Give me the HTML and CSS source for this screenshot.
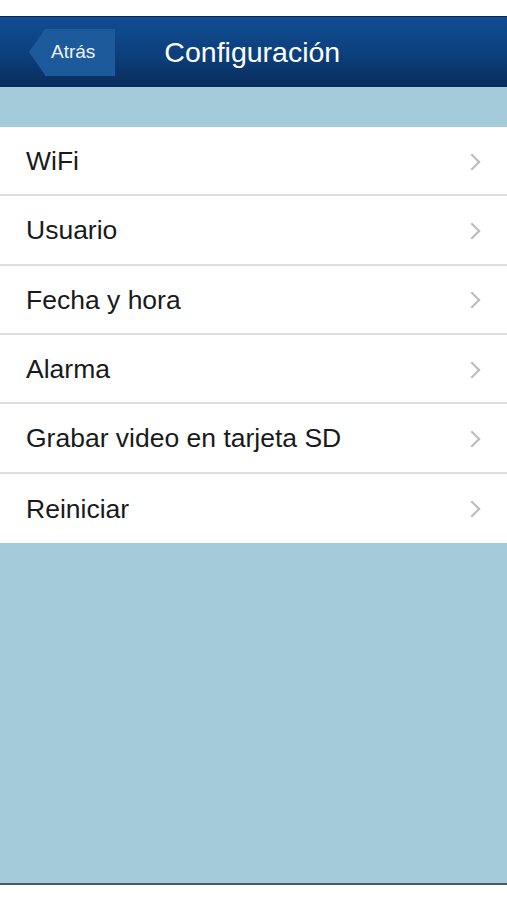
FILE: index.html
```html
<!DOCTYPE html>
<html lang="es">
<head>
    <meta charset="UTF-8">
    <meta name="viewport" content="width=device-width, initial-scale=1.0">
    <title>Configuración</title>
    <link rel="stylesheet" href="styles.css">
</head>
<body>
    <div class="pantalla">
        <div class="barra-estado"></div>
        <div class="cabecera">
            <div class="atras">
                <span class="atras-punta"></span>
                <span class="atras-texto">Atrás</span>
            </div>
            <div class="titulo">Configuración</div>
        </div>
        <div class="contenido">
            <div class="espacio"></div>
            <ul class="lista">
                <li class="fila"><span>WiFi</span><span class="flecha"></span></li>
                <li class="fila"><span>Usuario</span><span class="flecha"></span></li>
                <li class="fila"><span>Fecha y hora</span><span class="flecha"></span></li>
                <li class="fila"><span>Alarma</span><span class="flecha"></span></li>
                <li class="fila"><span>Grabar video en tarjeta SD</span><span class="flecha"></span></li>
                <li class="fila"><span>Reiniciar</span><span class="flecha"></span></li>
            </ul>
        </div>
        <div class="pie"></div>
    </div>
</body>
</html>
```

FILE: styles.css
```css
body {
    margin: 0;
    background: #ffffff;
    font-family: "Liberation Sans", Arial, sans-serif;
}
.pantalla {
    display: flex;
    flex-direction: column;
    height: 900px;
}
.barra-estado {
    height: 16px;
    background: #ffffff;
}
.cabecera {
    height: 71px;
    display: flex;
    align-items: center;
    background: linear-gradient(to bottom, #114d92 0%, #0c3f7c 55%, #092c5b 100%);
    border-top: 1px solid #0a2a55;
    box-sizing: border-box;
}
.atras {
    display: flex;
    align-items: center;
    height: 47px;
    margin-left: 29px;
}
.atras-punta {
    width: 0;
    height: 0;
    border-top: 23.5px solid transparent;
    border-bottom: 23.5px solid transparent;
    border-right: 16px solid #1d5a9c;
}
.atras-texto {
    display: flex;
    align-items: center;
    height: 47px;
    padding: 0 20px 0 6px;
    background: #1d5a9c;
    color: #eef4fb;
    font-size: 19px;
}
.titulo {
    margin-left: 49px;
    color: #ffffff;
    font-size: 28.5px;
}
.contenido {
    flex: 1;
    background: #a3cbd9;
}
.espacio {
    height: 40px;
}
.lista {
    list-style: none;
    margin: 0;
    padding: 0;
    background: #ffffff;
}
.fila {
    display: flex;
    align-items: center;
    justify-content: space-between;
    height: 69.33px;
    box-sizing: border-box;
    padding: 2px 26px 0;
    font-size: 26.5px;
    color: #1a1a1a;
    border-bottom: 2px solid #dedede;
}
.fila:last-child {
    border-bottom: none;
}
.flecha {
    width: 10px;
    height: 10px;
    border-top: 2px solid #bbbbbb;
    border-right: 2px solid #bbbbbb;
    transform: rotate(45deg);
    margin-right: 3px;
}
.pie {
    height: 15px;
    border-top: 2px solid #4a5b62;
    background: #ffffff;
}
```
